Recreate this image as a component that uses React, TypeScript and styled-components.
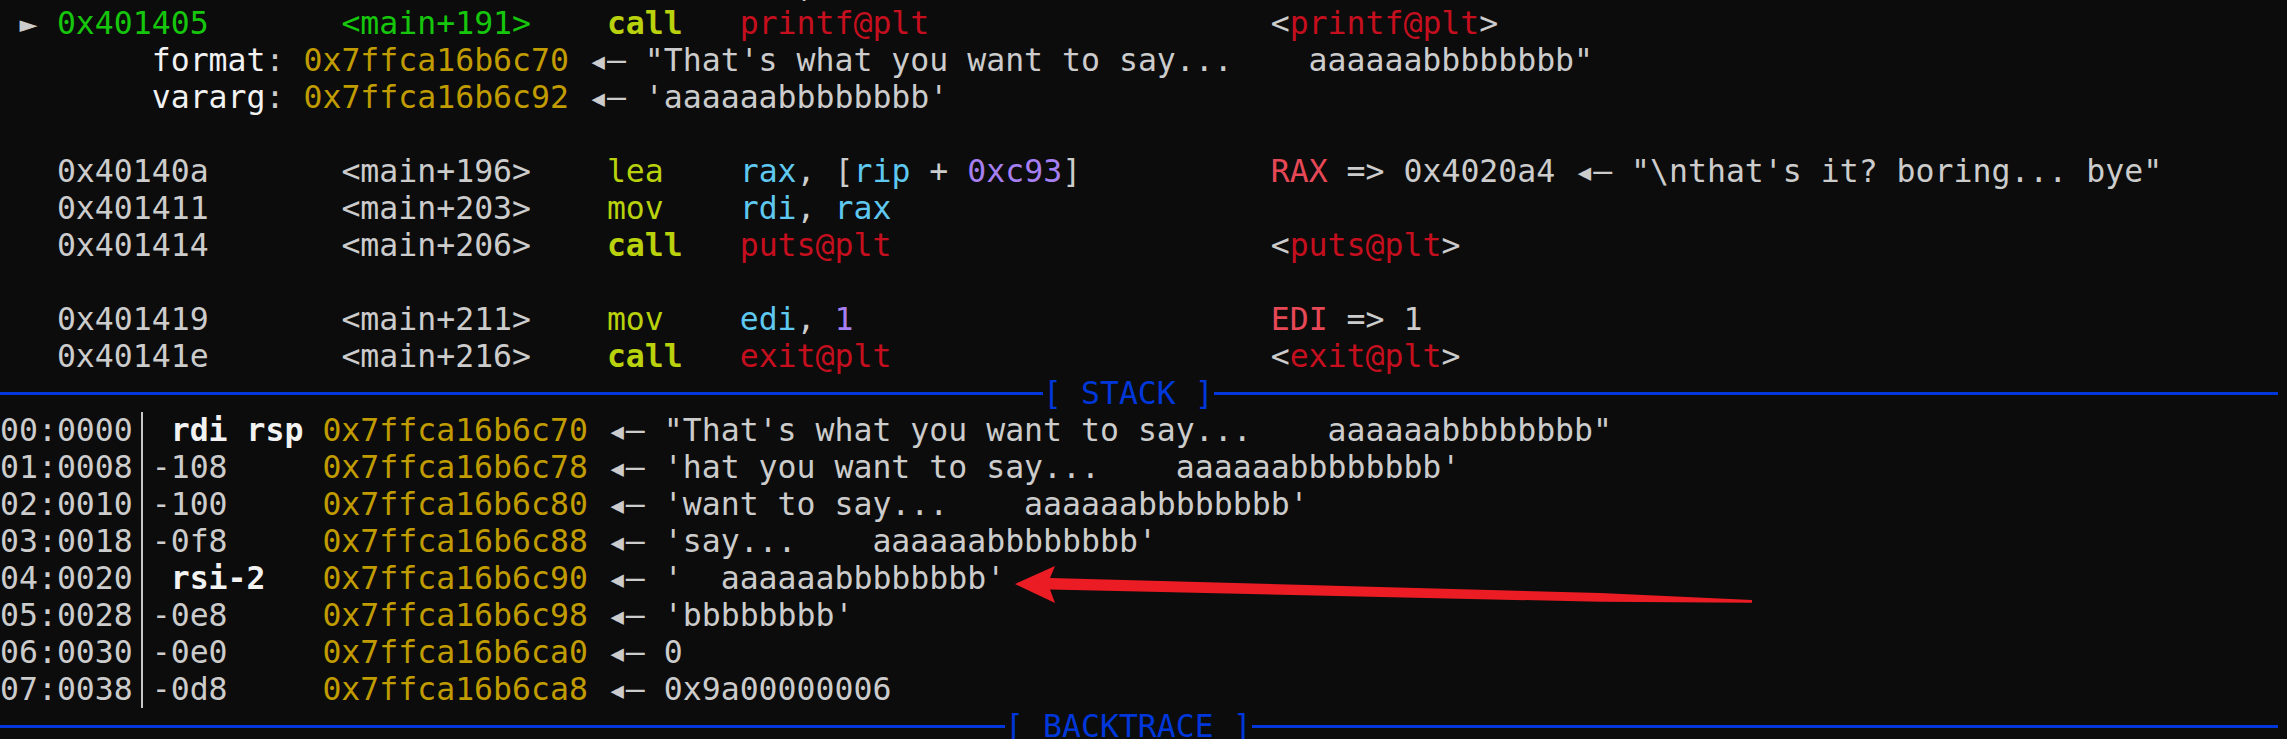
import React from 'react';
import styled, { createGlobalStyle } from 'styled-components';

const CELL = 18.965;

const palette = {
  g: '#CCCCCC',
  w: '#F2F2F2',
  G: '#16C60C',
  L: '#B9D20C',
  C: '#5EC8F0',
  P: '#A67FF2',
  R: '#C50F1F',
  E: '#E74856',
  Y: '#C19C00',
  B: '#0037DA',
} as const;

type Tone = keyof typeof palette;
type Seg = [string, Tone, boolean?];

const GlobalStyle = createGlobalStyle`
  html, body {
    margin: 0;
    padding: 0;
    background: #0c0c0c;
    overflow: hidden;
  }
`;

const Page = styled.div`
  position: relative;
  width: 2287px;
  height: 739px;
  overflow: hidden;
  background: #0c0c0c;
`;

const Screen = styled.div`
  margin-top: -32px;
  font-family: 'DejaVu Sans Mono', monospace;
  font-size: 31.5px;
  line-height: 37px;
  color: #cccccc;
  white-space: pre;
`;

const Line = styled.div`
  height: 37px;
`;

const Tok = styled.span<{ $tone: Tone; $bold?: boolean }>`
  color: ${(p) => palette[p.$tone]};
  font-weight: ${(p) => (p.$bold ? 700 : 400)};
`;

const Glyph = styled.span<{ $size: number }>`
  display: inline-block;
  width: ${CELL}px;
  height: 37px;
  text-align: center;
  font-size: ${(p) => p.$size}px;
  line-height: 37px;
  vertical-align: top;
`;

const Bar = styled.span`
  display: inline-block;
  width: 1ch;
  height: 37px;
  vertical-align: top;
  background: linear-gradient(#c8c8c8, #c8c8c8) center / 2px 100% no-repeat;
`;

const SectionHeader = styled.div`
  display: flex;
  align-items: center;
  width: 120.1ch;
  height: 37px;
  color: ${palette.B};
`;

const Rule = styled.span<{ $cells?: number }>`
  height: 3px;
  background: ${palette.B};
  flex: ${(p) => (p.$cells ? `0 0 ${p.$cells}ch` : '1 1 auto')};
`;

const Label = styled.span`
  white-space: pre;
`;

const Overlay = styled.svg`
  position: absolute;
  left: 0;
  top: 0;
  pointer-events: none;
`;

function renderText(text: string) {
  const parts = text.split(/([◂►])/);
  return parts.map((part, i) => {
    if (part === '◂')
      return (
        <Glyph key={i} $size={34}>
          ◂
        </Glyph>
      );
    if (part === '►')
      return (
        <Glyph key={i} $size={30}>
          ►
        </Glyph>
      );
    return <React.Fragment key={i}>{part}</React.Fragment>;
  });
}

function Segs({ segs }: { segs: Seg[] }) {
  return (
    <>
      {segs.map(([text, tone, bold], i) => (
        <Tok key={i} $tone={tone} $bold={bold}>
          {renderText(text)}
        </Tok>
      ))}
    </>
  );
}

interface Inst {
  cur?: boolean;
  addr: string;
  sym: string;
  m: string;
  ops: Seg[];
  cmt: Seg[];
}

function InstLine({ inst }: { inst: Inst }) {
  const tone: Tone = inst.cur ? 'G' : 'g';
  const opsLen = inst.ops.reduce((n, s) => n + s[0].length, 0);
  const segs: Seg[] = [
    [inst.cur ? ' ► ' : '   ', 'g'],
    [inst.addr, tone],
    ['       ', 'g'],
    [inst.sym, tone],
    ['    ', 'g'],
    [inst.m, 'L', inst.m === 'call'],
    [' '.repeat(7 - inst.m.length), 'g'],
    ...inst.ops,
  ];
  if (inst.cmt.length) {
    segs.push([' '.repeat(Math.max(1, 28 - opsLen)), 'g'], ...inst.cmt);
  }
  return (
    <Line>
      <Segs segs={segs} />
    </Line>
  );
}

const plt = (name: string): Seg[] => [
  ['<', 'g'],
  [name, 'R'],
  ['>', 'g'],
];

const current: Inst = {
  cur: true,
  addr: '0x401405',
  sym: '<main+191>',
  m: 'call',
  ops: [['printf@plt', 'R']],
  cmt: plt('printf@plt'),
};

const middle: Inst[] = [
  {
    addr: '0x40140a',
    sym: '<main+196>',
    m: 'lea',
    ops: [['rax', 'C'], [', [', 'g'], ['rip', 'C'], [' + ', 'g'], ['0xc93', 'P'], [']', 'g']],
    cmt: [['RAX', 'E'], [' => 0x4020a4 ◂— "\\nthat\'s it? boring... bye"', 'g']],
  },
  { addr: '0x401411', sym: '<main+203>', m: 'mov', ops: [['rdi', 'C'], [', ', 'g'], ['rax', 'C']], cmt: [] },
  { addr: '0x401414', sym: '<main+206>', m: 'call', ops: [['puts@plt', 'R']], cmt: plt('puts@plt') },
];

const after: Inst[] = [
  { addr: '0x401419', sym: '<main+211>', m: 'mov', ops: [['edi', 'C'], [', ', 'g'], ['1', 'P']], cmt: [['EDI', 'E'], [' => 1', 'g']] },
  { addr: '0x40141e', sym: '<main+216>', m: 'call', ops: [['exit@plt', 'R']], cmt: plt('exit@plt') },
];

const args: { name: string; addr: string; value: string }[] = [
  { name: 'format', addr: '0x7ffca16b6c70', value: '"That\'s what you want to say...    aaaaaabbbbbbbb"' },
  { name: 'vararg', addr: '0x7ffca16b6c92', value: "'aaaaaabbbbbbbb'" },
];

const stack: { idx: string; label: string; reg?: boolean; addr: string; value: string }[] = [
  { idx: '00:0000', label: ' rdi rsp', reg: true, addr: '0x7ffca16b6c70', value: '"That\'s what you want to say...    aaaaaabbbbbbbb"' },
  { idx: '01:0008', label: '-108', addr: '0x7ffca16b6c78', value: "'hat you want to say...    aaaaaabbbbbbbb'" },
  { idx: '02:0010', label: '-100', addr: '0x7ffca16b6c80', value: "'want to say...    aaaaaabbbbbbbb'" },
  { idx: '03:0018', label: '-0f8', addr: '0x7ffca16b6c88', value: "'say...    aaaaaabbbbbbbb'" },
  { idx: '04:0020', label: ' rsi-2', reg: true, addr: '0x7ffca16b6c90', value: "'  aaaaaabbbbbbbb'" },
  { idx: '05:0028', label: '-0e8', addr: '0x7ffca16b6c98', value: "'bbbbbbbb'" },
  { idx: '06:0030', label: '-0e0', addr: '0x7ffca16b6ca0', value: '0' },
  { idx: '07:0038', label: '-0d8', addr: '0x7ffca16b6ca8', value: '0x9a00000006' },
];

function Header({ title, lead }: { title: string; lead: number }) {
  return (
    <SectionHeader>
      <Rule $cells={lead} />
      <Label>{title}</Label>
      <Rule />
    </SectionHeader>
  );
}

export default function App() {
  return (
    <Page>
      <GlobalStyle />
      <Screen>
        <Line>
          <Tok $tone="g">{' '.repeat(42) + ','}</Tok>
        </Line>
        <InstLine inst={current} />
        {args.map((a) => (
          <Line key={a.name}>
            <Segs
              segs={[
                ['        ', 'g'],
                [a.name, 'w'],
                [': ', 'g'],
                [a.addr, 'Y'],
                [' ◂— ' + a.value, 'g'],
              ]}
            />
          </Line>
        ))}
        <Line />
        {middle.map((inst) => (
          <InstLine key={inst.addr} inst={inst} />
        ))}
        <Line />
        {after.map((inst) => (
          <InstLine key={inst.addr} inst={inst} />
        ))}
        <Header title="[ STACK ]" lead={55} />
        {stack.map((s) => (
          <Line key={s.idx}>
            <Tok $tone="g">{s.idx}</Tok>
            <Bar />
            <Tok $tone={s.reg ? 'w' : 'g'} $bold={s.reg}>
              {s.label.padEnd(9)}
            </Tok>
            <Tok $tone="Y">{s.addr}</Tok>
            <Tok $tone="g">{renderText(' ◂— ' + s.value)}</Tok>
          </Line>
        ))}
        <Header title="[ BACKTRACE ]" lead={53} />
      </Screen>
      <Overlay width="2287" height="739" viewBox="0 0 2287 739">
        <polygon
          points="1015,584 1055,566 1050,578 1600,593 1752,600 1752,602.8 1600,601.8 1050,589.5 1055,603"
          fill="#EC1C24"
        />
      </Overlay>
    </Page>
  );
}
